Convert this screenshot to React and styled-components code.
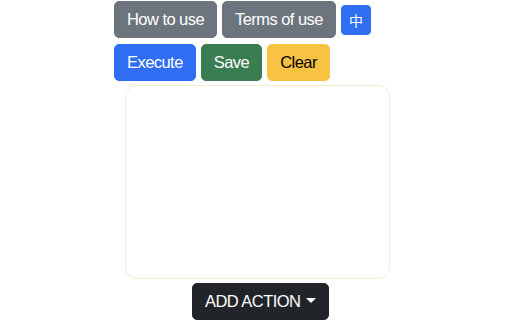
import React from "react";
import styled, { createGlobalStyle } from "styled-components";

const Global = createGlobalStyle`
  html, body { margin: 0; padding: 0; background: #fff; }
  body { font-family: "Liberation Sans", Arial, sans-serif; }
  * { box-sizing: border-box; }
`;

const Page = styled.div`
  width: 512px;
  height: 320px;
  padding: 1px 0 0 114px;
  display: flex;
  flex-direction: column;
  overflow: hidden;
`;

const ButtonRow = styled.div`
  display: flex;
  align-items: center;
  gap: 5px;
  margin-bottom: ${(p) => p.$mb || 0}px;
`;

const palette = {
  secondary: { bg: "#6c757d", fg: "#fff" },
  primary: { bg: "#2f6ef3", fg: "#fff" },
  success: { bg: "#3a7d52", fg: "#fff" },
  warning: { bg: "#f8c343", fg: "#000" },
  dark: { bg: "#212529", fg: "#fff" },
};

const Button = styled.button`
  font-family: "Liberation Sans", Arial, sans-serif;
  font-size: ${(p) => (p.$small ? 14 : 16.5)}px;
  letter-spacing: ${(p) => (p.$small ? 0 : -0.55)}px;
  line-height: ${(p) => (p.$small ? 20 : 23)}px;
  padding: ${(p) => (p.$small ? "4px 7px" : "6px 12px")};
  border: 1px solid ${(p) => palette[p.$variant].bg};
  border-radius: ${(p) => (p.$small ? 4 : 5)}px;
  background: ${(p) => palette[p.$variant].bg};
  color: ${(p) => palette[p.$variant].fg};
  display: inline-flex;
  align-items: center;
  white-space: nowrap;
  cursor: pointer;
`;

const SmallCJK = styled.span`
  font-family: "Noto Sans CJK SC", sans-serif;
  font-size: 14px;
`;

const Editor = styled.div`
  width: 265px;
  height: 194px;
  margin-left: 11px;
  border: 1px solid #f4ebd2;
  border-radius: 12px;
  background: #fff;
  margin-bottom: 4px;
`;

const ActionRow = styled.div`
  padding-left: 78px;
  display: flex;
`;

const Caret = styled.span`
  display: inline-block;
  margin-left: 6px;
  border-top: 5px solid #fff;
  border-left: 5px solid transparent;
  border-right: 5px solid transparent;
  margin-top: -2px;
`;

export default function App() {
  return (
    <>
      <Global />
      <Page>
        <ButtonRow $mb={6}>
          <Button $variant="secondary">How to use</Button>
          <Button $variant="secondary">Terms of use</Button>
          <Button $variant="primary" $small>
            <SmallCJK>中</SmallCJK>
          </Button>
        </ButtonRow>
        <ButtonRow $mb={4}>
          <Button $variant="primary">Execute</Button>
          <Button $variant="success">Save</Button>
          <Button $variant="warning">Clear</Button>
        </ButtonRow>
        <Editor />
        <ActionRow>
          <Button $variant="dark">
            ADD ACTION
            <Caret />
          </Button>
        </ActionRow>
      </Page>
    </>
  );
}
